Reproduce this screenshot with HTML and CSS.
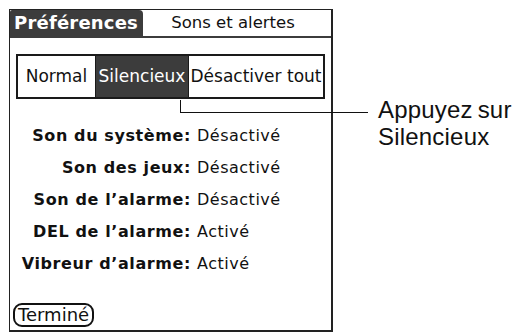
FILE: index.html
```html
<!DOCTYPE html>
<html>
<head>
<meta charset="utf-8">
<link rel="stylesheet" href="styles.css">
</head>
<body>
<div class="page">
  <div class="screen">
    <div class="titlebar">
      <div class="tab">Préférences</div>
      <div class="panel-name">Sons et alertes</div>
    </div>
    <div class="segments">
      <div class="seg">Normal</div>
      <div class="seg seg-on">Silencieux</div>
      <div class="seg">Désactiver tout</div>
    </div>
    <div class="rows">
      <div class="row"><span class="lbl">Son du système:</span><span class="val">Désactivé</span></div>
      <div class="row"><span class="lbl">Son des jeux:</span><span class="val">Désactivé</span></div>
      <div class="row"><span class="lbl">Son de l’alarme:</span><span class="val">Désactivé</span></div>
      <div class="row"><span class="lbl">DEL de l’alarme:</span><span class="val">Activé</span></div>
      <div class="row"><span class="lbl">Vibreur d’alarme:</span><span class="val">Activé</span></div>
    </div>
    <div class="footer">
      <div class="btn">Terminé</div>
    </div>
  </div>
  <div class="callout">Appuyez sur<br>Silencieux</div>
  <div class="leader-v"></div>
  <div class="leader-h"></div>
</div>
</body>
</html>
```
FILE: styles.css
```css
html, body {
  margin: 0;
  padding: 0;
  background: #ffffff;
}
.page {
  position: relative;
  width: 523px;
  height: 335px;
  display: flex;
  align-items: flex-start;
}
.screen {
  margin: 9px 0 0 9px;
  width: 321px;
  height: 320px;
  border-top: 1px solid #222;
  border-left: 1px solid #222;
  border-right: 2px solid #222;
  border-bottom: 2px solid #222;
  display: flex;
  flex-direction: column;
  font-family: "DejaVu Sans", sans-serif;
  color: #111;
}
.titlebar {
  display: flex;
  height: 26px;
  border-bottom: 2px solid #3c3c3c;
}
.tab {
  background: #3c3c3c;
  color: #fff;
  font-weight: bold;
  font-size: 18px;
  letter-spacing: 0.2px;
  width: 133px;
  padding-left: 4px;
  box-sizing: border-box;
  line-height: 26px;
  white-space: nowrap;
  border-top-left-radius: 2px;
  border-top-right-radius: 4px;
}
.panel-name {
  flex: 1;
  text-align: center;
  font-size: 16.5px;
  line-height: 26px;
  padding-right: 8px;
}
.segments {
  margin: 16px 6px 0 6px;
  height: 41px;
  border: 2px solid #1a1a1a;
  display: flex;
}
.seg {
  font-size: 17px;
  line-height: 41px;
  text-align: center;
  white-space: nowrap;
}
.seg:nth-child(1) { width: 77px; border-right: 1px solid #1a1a1a; }
.seg:nth-child(2) { width: 92px; border-right: 1px solid #1a1a1a; }
.seg:nth-child(3) { flex: 1; }
.seg-on {
  background: #3c3c3c;
  color: #fff;
}
.rows {
  margin-top: 20px;
  display: flex;
  flex-direction: column;
}
.row {
  display: flex;
  height: 32.2px;
  align-items: center;
  white-space: nowrap;
}
.lbl {
  width: 181px;
  text-align: right;
  font-weight: bold;
  font-size: 16px;
  letter-spacing: 0.6px;
}
.val {
  padding-left: 6px;
  font-size: 16px;
  letter-spacing: 0.5px;
}
.footer {
  margin-top: auto;
  padding: 0 0 3px 3px;
}
.btn {
  display: inline-block;
  border: 2px solid #111;
  border-radius: 9px;
  font-size: 18px;
  line-height: 20px;
  padding: 0 3px 0 3px;
}
.callout {
  margin: 96px 0 0 45px;
  font-family: "Liberation Sans", Arial, sans-serif;
  font-size: 24px;
  line-height: 27px;
  word-spacing: -2px;
  letter-spacing: 0.2px;
  color: #111;
}
.leader-v {
  position: absolute;
  left: 180px;
  top: 100px;
  width: 1px;
  height: 13px;
  background: #111;
}
.leader-h {
  position: absolute;
  left: 180px;
  top: 112px;
  width: 188px;
  height: 1px;
  background: #111;
}
```
